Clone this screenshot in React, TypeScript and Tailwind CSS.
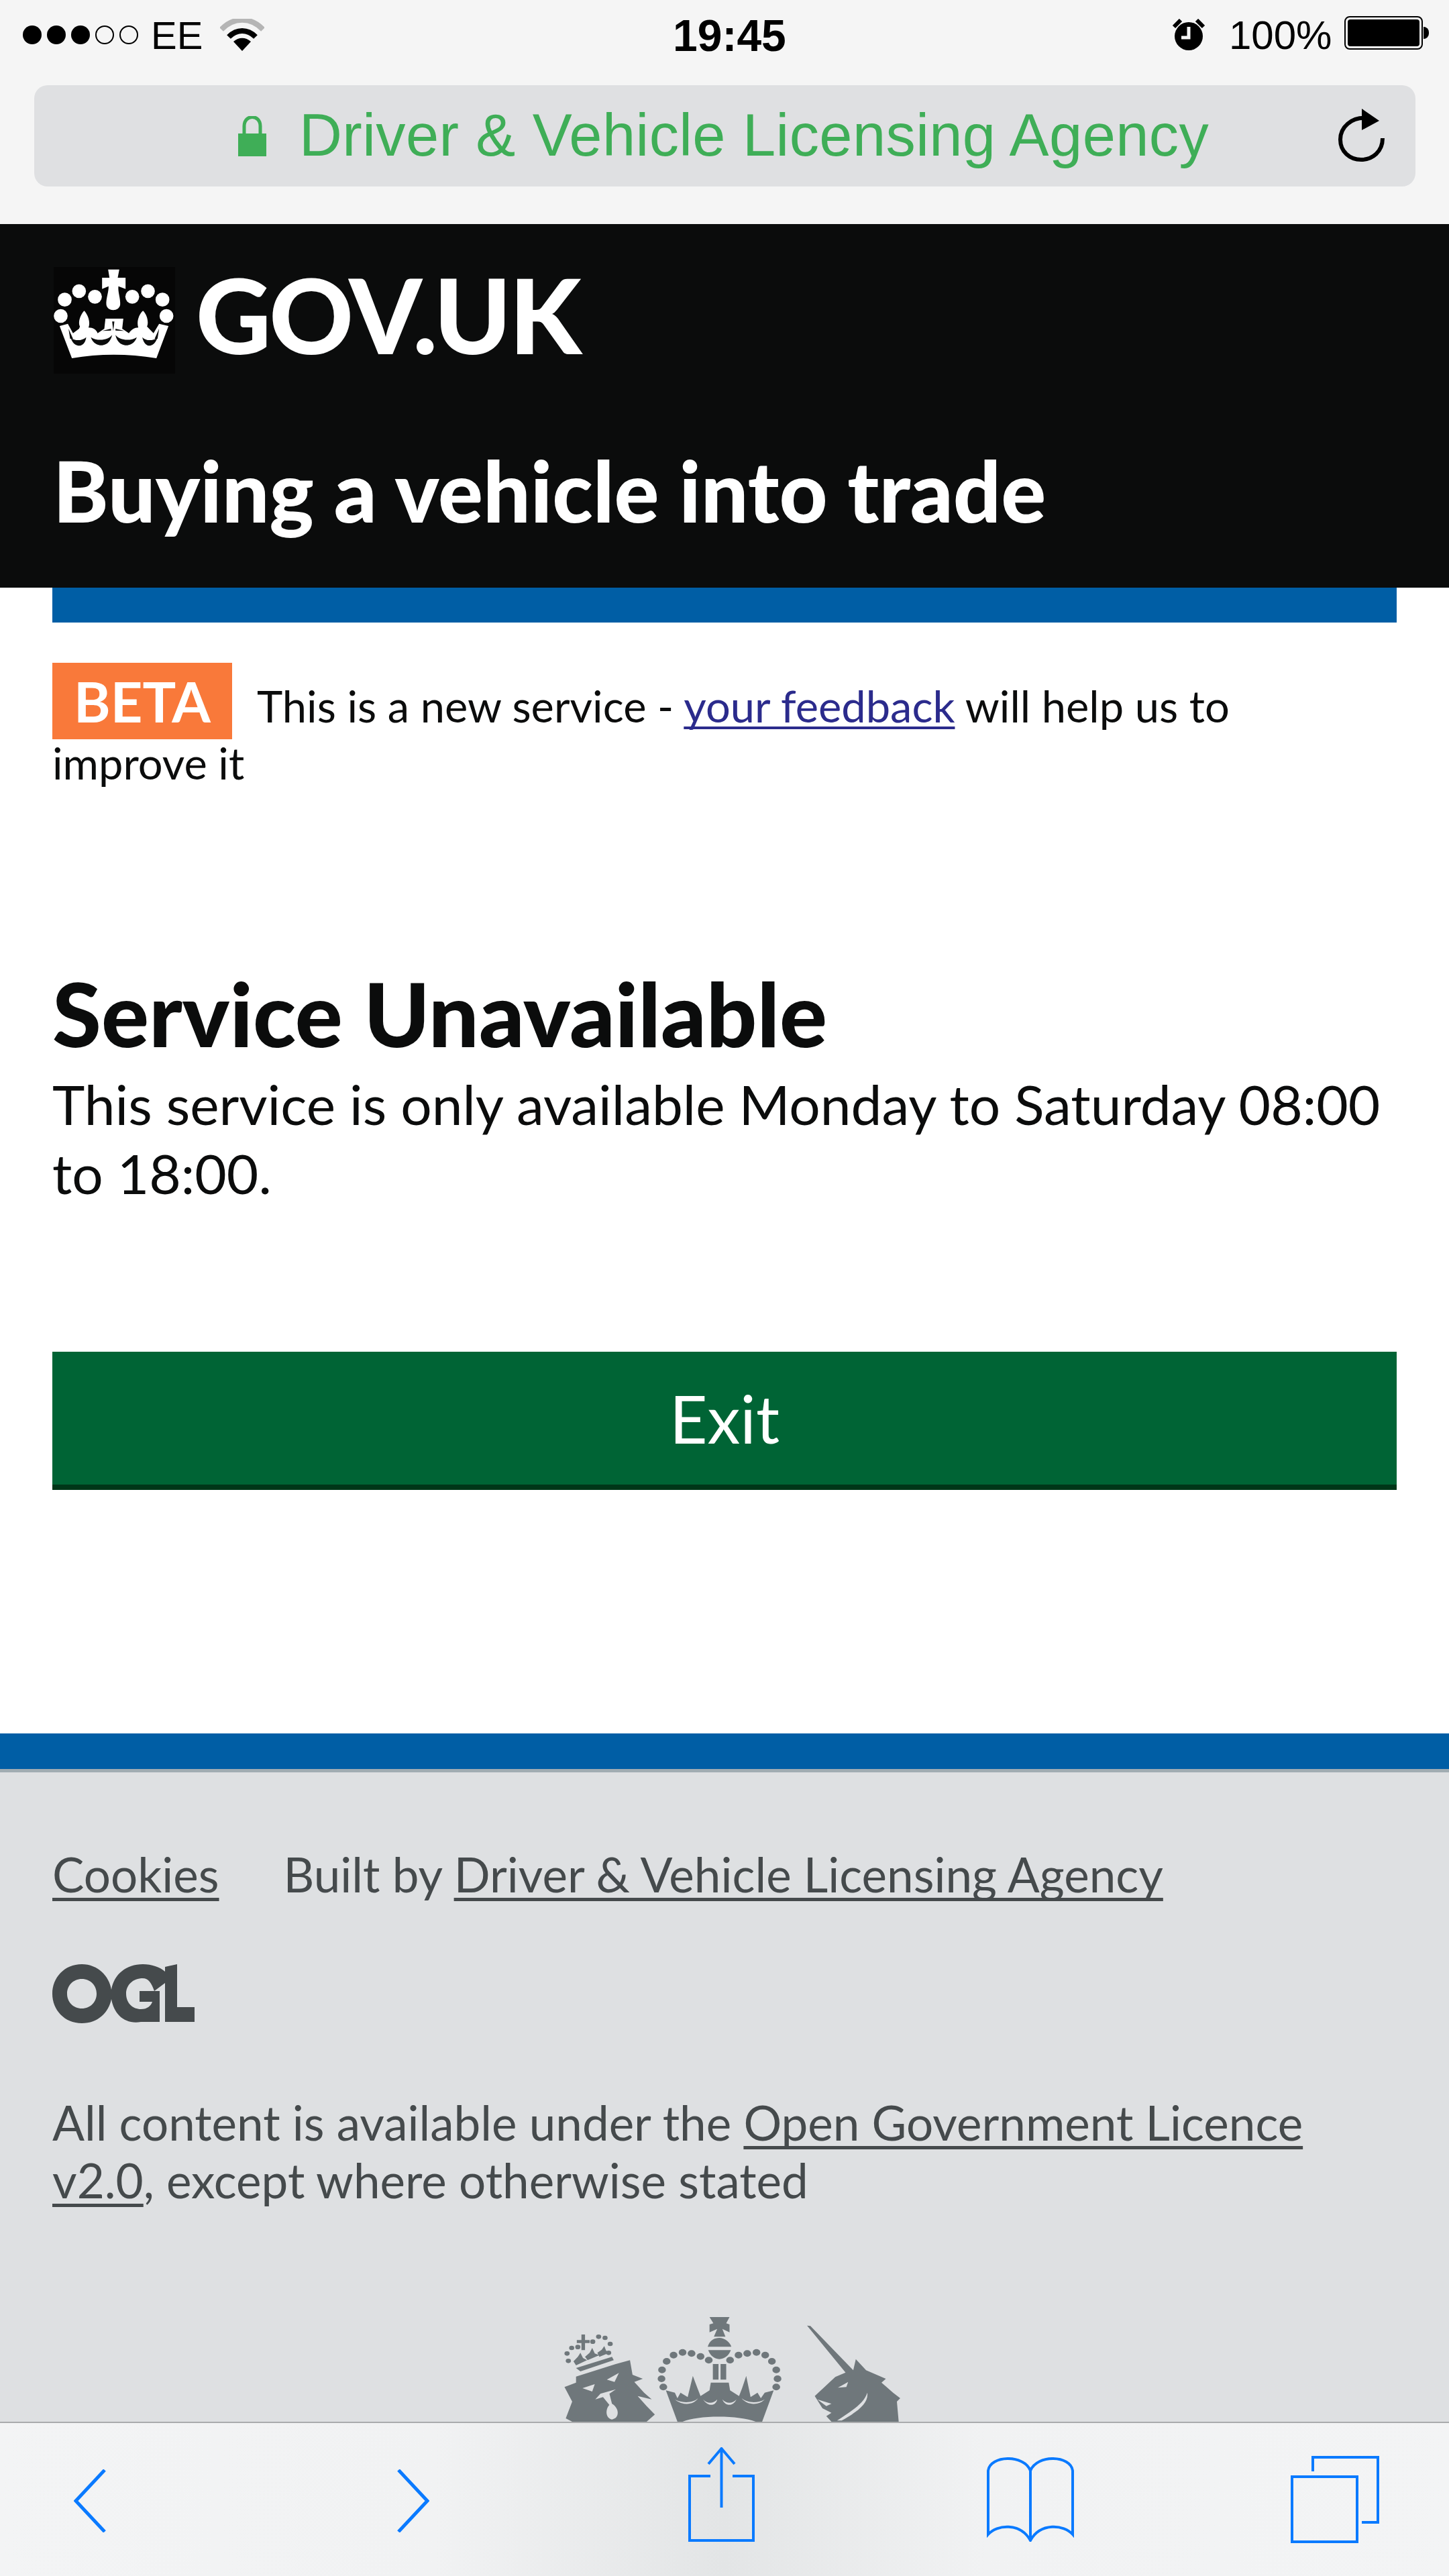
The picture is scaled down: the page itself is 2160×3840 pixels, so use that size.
import React from "react";

const gds = "font-['Lato','Noto_Sans',sans-serif]";

function BigCrown() {
  const beads = [[168,200],[232,162],[303,187],[150,273],[470,187],[540,162],[605,200],[623,273]];
  return (
    <svg width="181" height="159" viewBox="120 54 540 477" className="bg-[#060606] shrink-0">
      {beads.map(([x,y],i)=><circle key={i} cx={x} cy={y} r="31" fill="#fff"/>)}
      <path fill="#fff" d="M362 65H412L405 102H440V152L408 140C405 165 418 195 416 222C412 255 358 255 354 222C352 195 365 165 364 140L335 152V102H368Z"/>
      <path fill="#fff" d="M145 318L182 308L205 350L232 330L236 320C225 300 240 265 255 250C270 265 285 300 274 325C295 325 310 335 315 350L345 330L350 285H430L425 330L455 350C465 335 480 325 497 325C488 300 500 265 518 250C535 265 545 300 536 320L565 350L590 308L632 318L578 462Q385 430 200 462Z"/>
      <path fill="#0b0c0c" d="M195 372C210 418 258 418 264 368C245 385 215 385 195 372ZM285 368C300 418 368 418 380 358C360 385 310 385 285 368ZM395 358C405 418 475 418 490 368C465 385 415 385 395 358ZM515 368C525 418 565 418 582 372C560 385 530 385 515 368Z"/>
      <path fill="#0b0c0c" d="M380 298L385 340L390 298ZM335 340L375 330L375 338ZM435 340L395 330L395 338ZM185 330L205 375L192 375ZM590 330L570 375L583 375Z"/>
    </svg>
  );
}

function Crest() {
  const beads = [[545,415],[538,378],[540,338],[558,300],[585,272],[620,260],[655,265],[690,278],[722,295],[805,295],[838,272],[872,265],[908,260],[942,272],[968,300],[985,338],[990,378],[985,415]];
  const small = [[175,298],[170,265],[188,240],[212,236],[270,212],[293,190],[318,195],[338,222],[332,262]];
  return (
    <svg width="520" height="160" viewBox="130 90 1359 480" className="block ml-[830px] mt-[157px]" preserveAspectRatio="none">
      <g fill="#6f777b">
        {beads.map(([x,y],i)=><circle key={i} cx={x} cy={y} r="15"/>)}
        {small.map(([x,y],i)=><circle key={i} cx={x} cy={y} r="10"/>)}
        <path d="M725 102H803L790 130L803 135V170L775 155L787 190H742L755 155L725 170V135L740 130Z"/>
        <path d="M718 235C725 205 745 195 763 195C785 195 805 215 810 235Z"/>
        <path d="M720 250H808C800 275 785 288 763 290C742 288 728 275 720 250Z"/>
        <path d="M738 312H760V382H738ZM768 312H790V382H768Z"/>
        <path d="M555 430L590 440L600 465L612 440L640 460L660 365L678 420L690 455L725 430L730 395H800L805 430L840 455L852 420L868 365L885 460L912 440L925 465L940 440L975 430L930 570H600Z"/>
        {/* lion crown */}
        <path d="M226 180H240V205H258V218H240V250H226V218H208V205H226Z"/>
        <path d="M205 330L345 280L352 295L222 345Z"/>
        <path d="M212 280L222 262L232 285L248 295L205 318L195 300ZM258 262L268 240L278 265L296 272L250 295L240 280ZM305 248L315 232L322 252L335 262L296 280L288 262Z"/>
        {/* lion head */}
        <path d="M205 368L360 312L415 295L425 360L465 378L432 392L470 440L500 470L445 455L480 500L512 538L480 570H190L165 555L190 480L160 415L205 395Z"/>
        {/* unicorn */}
        <path d="M1105 140L1118 142L1285 340L1295 290L1335 340L1412 378L1395 395L1440 440L1468 465L1455 480L1462 570H1200L1180 545L1200 530L1165 510L1135 455L1215 370L1255 350Z"/>
      </g>
      <g fill="#dee0e2">
        <path d="M230 420L278 402L268 435ZM325 382L372 352L355 392Z"/>
        <path d="M280 470L300 445L360 425L335 445L345 490C375 510 375 555 345 560C320 555 318 515 335 495L310 460Z"/>
        <path d="M1225 418L1265 392L1258 415Z"/>
        <path d="M1340 440C1325 490 1280 520 1222 565L1240 565C1300 525 1345 490 1340 440Z"/>
        <path d="M1145 470L1200 490L1180 500Z"/>
        <path d="M620 570C680 540 840 540 905 570Z"/>
        <path d="M590 470C620 500 665 495 680 465C665 485 620 490 590 470ZM700 470C720 505 750 500 755 470C740 490 715 490 700 470ZM775 470C785 500 815 505 830 470C815 490 790 490 775 470ZM850 465C870 495 915 500 940 470C910 490 870 485 850 465Z"/>
      </g>
    </svg>
  );
}

function Ogl() {
  return (
    <svg width="212" height="88" viewBox="0 0 212 88" className="block">
      <path fill="#454a4c" fillRule="evenodd" d="M44 0C68 0 85 18 88 38C92 15 110 0 135 0C148 0 160 4 168 11V4L186 0V64H212V86H132V86C108 90 92 75 88 52C84 72 68 88 44 88C18 88 0 68 0 44C0 20 18 0 44 0ZM44 22C31 22 22 32 22 44C22 56 31 66 44 66C57 66 66 56 66 44C66 32 57 22 44 22ZM135 21C120 21 110 31 110 44C110 58 120 67 132 67C142 67 147 62 149 56H130V40H160V86H168V28L152 40C148 28 143 21 135 21Z"/>
    </svg>
  );
}

export default function App() {
  const link = "underline underline-offset-[8px] decoration-[5px] [text-decoration-skip-ink:none]";
  return (
    <div className="w-[2160px] h-[3840px] flex flex-col overflow-hidden bg-white">
      {/* phone status + url bar */}
      <div className="h-[334px] shrink-0 bg-[#f5f5f5] flex flex-col font-['Liberation_Sans',sans-serif] text-black">
        <div className="h-[127px] flex items-start pt-[24px] relative">
          <div className="flex items-center gap-[8px] ml-[34px] mt-[14px]">
            {[0,1,2].map(i=><span key={i} className="w-[28px] h-[28px] rounded-full bg-black"/>)}
            {[0,1].map(i=><span key={i} className="w-[28px] h-[28px] rounded-full border-2 border-black"/>)}
          </div>
          <span className="ml-[19px] text-[58px] leading-[58px] w-[79px]">EE</span>
          <svg width="66" height="48" viewBox="0 0 66 48" className="ml-[24px] mt-[4px]">
            <path d="M2 16C20 -3 46 -3 64 16" fill="none" stroke="#b5b5b5" strokeWidth="8"/>
            <path d="M13 27C25 15 41 15 53 27" fill="none" stroke="#000" strokeWidth="8"/>
            <path d="M33 48L20 34C28 27 38 27 46 34Z" fill="#000"/>
          </svg>
          <span className="ml-[609px] text-[66px] leading-[58px] font-bold w-[168px] text-center">19:45</span>
          <svg width="52" height="48" viewBox="0 0 52 48" className="ml-[575px] mt-[4px]">
            <circle cx="26" cy="26" r="21" fill="#000"/>
            <path d="M4 12L14 2M48 12L38 2" stroke="#000" strokeWidth="6"/>
            <path d="M26 12V28H15" stroke="#f5f5f5" strokeWidth="5" fill="none"/>
          </svg>
          <span className="ml-[34px] text-[60px] leading-[58px] w-[154px]">100%</span>
          <div className="ml-[18px] w-[117px] h-[50px] rounded-[8px] border-2 border-black p-[3px]">
            <div className="w-full h-full bg-black rounded-[4px]"/>
          </div>
          <span className="w-[8px] h-[18px] bg-black rounded-r-full mt-[16px] ml-[1px]"/>
        </div>
        <div className="mx-[51px] w-[2059px] h-[151px] rounded-[20px] bg-[#dfe0e2] flex items-center relative">
          <svg width="42" height="60" viewBox="0 0 42 60" className="ml-[304px] shrink-0">
            <path d="M9 28V15C9 -3 33 -3 33 15V28" fill="none" stroke="#3fae57" strokeWidth="5"/>
            <rect x="0" y="26" width="42" height="34" fill="#3fae57"/>
          </svg>
          <span className="ml-[49px] text-[88.500px] tracking-[0.4px] leading-none text-[#3fae57] whitespace-nowrap">Driver &amp; Vehicle Licensing Agency</span>
          <svg width="72" height="80" viewBox="0 0 72 80" className="absolute right-[44px] top-[35px]">
            <path d="M44 14C20 12 4 28 4 46C4 64 18 76 35 76C52 76 67 64 67 44" fill="none" stroke="#000" strokeWidth="6"/>
            <path d="M36 0L62 18L36 32Z" fill="#000"/>
          </svg>
        </div>
      </div>

      {/* page, clipped by browser toolbar */}
      <div className="flex-1 min-h-0 overflow-hidden flex flex-col">
        <header className={`bg-[#0b0c0c] h-[542px] shrink-0 text-white px-[80px] ${gds}`}>
          <div className="flex items-start pt-[59px] h-[322px]">
            <div className="mt-[5px] shrink-0"><BigCrown /></div>
            <span className="ml-[31px] text-[155px] leading-[150px] font-black tracking-[-3px]">GOV.UK</span>
          </div>
          <h1 className="text-[125px] leading-[150px] font-black -ml-[1px]">Buying a vehicle into trade</h1>
        </header>
        <main className={`shrink-0 h-[1708px] px-[78px] text-[#0b0c0c] ${gds}`}>
          <div className="h-[52px] bg-[#005ea5]"/>
          <p className="mt-[60px] text-[65px] leading-[85px] w-[1900px]">
            <span className="inline-block w-[268px] h-[114px] bg-[#f9793a] text-white text-center font-bold text-[83px] leading-[114px] mr-[37px] -mb-[10px]">BETA</span>
            This is a new service - <a className="text-[#2b2b8c] underline underline-offset-[6px] decoration-[4px] [text-decoration-skip-ink:none]">your feedback</a> will help us to improve it
          </p>
          <h2 className="mt-[265px] text-[132.500px] leading-[130px] font-black">Service Unavailable</h2>
          <p className="mt-[19px] text-[82px] leading-[103px]">This service is only available Monday to Saturday 08:00 to 18:00.</p>
          <button className="mt-[215px] block w-full h-[206px] bg-[#006435] border-b-[8px] border-[#003618] text-white text-[98px]">Exit</button>
        </main>
        <footer className={`shrink-0 bg-[#dee0e2] flex-1 border-t-[53px] border-[#005ea5] text-[#454a4c] ${gds}`}>
          <div className="h-[5px] bg-[#a1acb2]"/>
          <div className="px-[78px] pt-[109px] text-[71px] leading-[86px]">
            <p><a className={link}>Cookies</a><span className="ml-[96px]">Built by </span><a className={link}>Driver &amp; Vehicle Licensing Agency</a></p>
            <div className="mt-[91px]"><Ogl/></div>
            <p className="mt-[105px] w-[1900px]">All content is available under the <a className={link}>Open Government Licence v2.0</a>, except where otherwise stated</p>
          </div>
          <Crest />
        </footer>
      </div>

      {/* browser toolbar */}
      <nav className="h-[230px] shrink-0 border-t-[2px] border-[#a9abad] bg-[linear-gradient(90deg,#f3f4f5_0%,#f1f2f3_30%,#e3e5e6_50%,#f1f2f3_68%,#f3f4f5_100%)] flex items-start pt-[36px]">
        <svg width="48" height="94" viewBox="0 0 48 94" className="ml-[110px] mt-[33px] shrink-0"><path d="M46 1L3 47L46 93" fill="none" stroke="#0a7aff" strokeWidth="5"/></svg>
        <svg width="48" height="94" viewBox="0 0 48 94" className="ml-[434px] mt-[33px] shrink-0"><path d="M2 1L45 47L2 93" fill="none" stroke="#0a7aff" strokeWidth="5"/></svg>
        <svg width="99" height="142" viewBox="0 0 99 142" className="ml-[386px] shrink-0">
          <path d="M33 43H2V139H97V43H66" fill="none" stroke="#0a7aff" strokeWidth="4"/>
          <path d="M49.500 90V2M30 25L49.500 2L69 25" fill="none" stroke="#0a7aff" strokeWidth="4"/>
        </svg>
        <svg width="130" height="126" viewBox="0 0 130 126" className="ml-[346px] mt-[15px] shrink-0">
          <path d="M65 122V20C55 -5 5 -3 2 20V115C15 100 50 97 65 124C80 97 115 100 128 115V20C125 -3 75 -5 65 20" fill="none" stroke="#0a7aff" strokeWidth="4"/>
        </svg>
        <svg width="133" height="132" viewBox="0 0 133 132" className="ml-[323px] mt-[12px] shrink-0">
          <rect x="2" y="32" width="97" height="97" fill="none" stroke="#0a7aff" strokeWidth="4"/>
          <path d="M33 24V3H130V100H106" fill="none" stroke="#0a7aff" strokeWidth="4"/>
        </svg>
      </nav>
    </div>
  );
}
